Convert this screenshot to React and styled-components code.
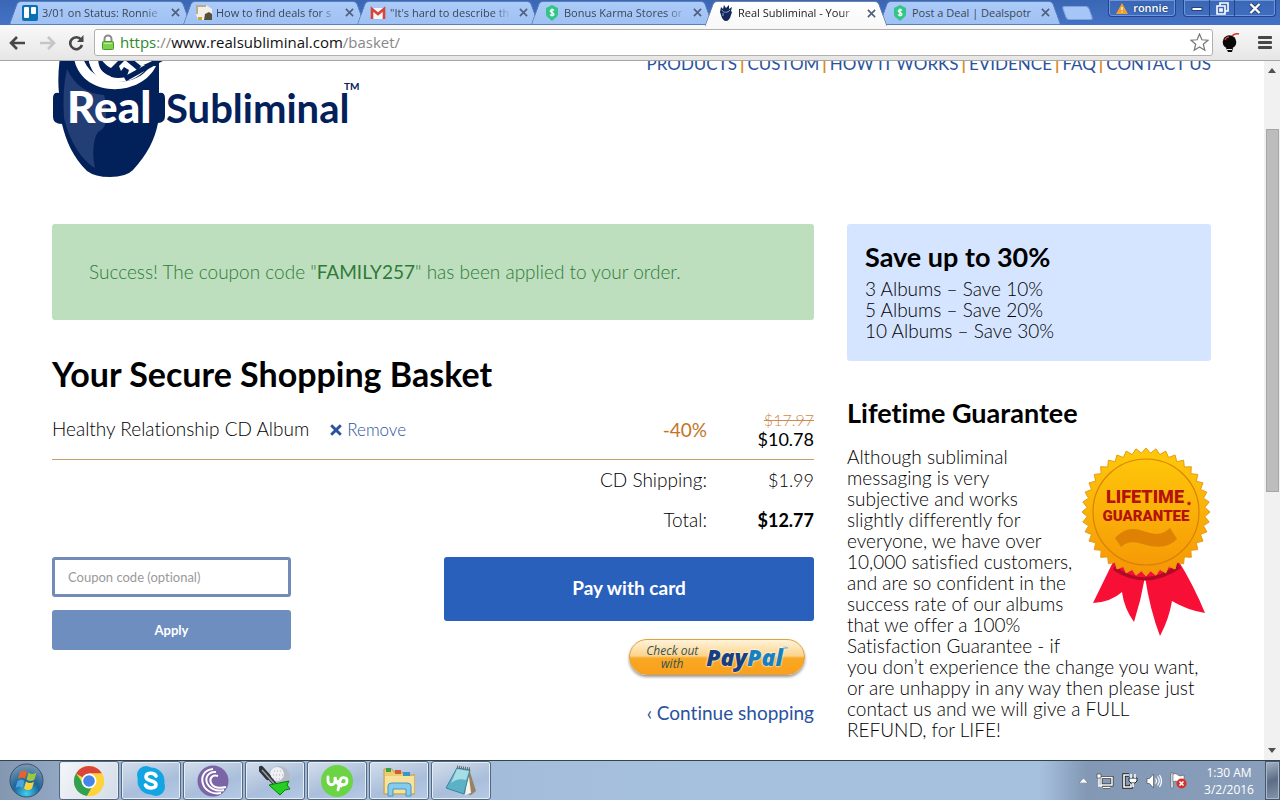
import React from "react";
import styled, { createGlobalStyle, css } from "styled-components";

const GlobalStyle = createGlobalStyle`
  *, *::before, *::after { box-sizing: border-box; }
  body {
    margin: 0;
    background: #fff;
    color: #000;
    font-family: "Lato", "Liberation Sans", sans-serif;
    font-variant-ligatures: none;
  }
  button, input { font: inherit; margin: 0; }
  a { color: #2a529e; text-decoration: none; }
  svg { display: block; flex: none; }
`;

const uiFont = `"Open Sans", "Noto Sans", sans-serif`;

const Desktop = styled.div`
  display: flex;
  flex-direction: column;
  height: 100vh;
  overflow: hidden;
`;

/* ---------- browser window ---------- */

const TabStrip = styled.div`
  display: flex;
  align-items: flex-start;
  height: 25px;
  padding: 0 4px 0 13px;
  background: linear-gradient(#3a66b4, #4472c6);
  font-family: ${uiFont};
`;

const tabHalf = css`
  content: "";
  position: absolute;
  z-index: -1;
  top: 1px;
  bottom: 0;
  width: 54%;
  background: ${(p) => (p.$active ? "linear-gradient(#ffffff, #f8f8f8)" : "linear-gradient(#abcbf8, #9fc1f3)")};
  border: 0 solid ${(p) => (p.$active ? "#6d83a8" : "#5b7fb8")};
  border-top-width: 1px;
  border-bottom-width: ${(p) => (p.$active ? "0" : "1px")};
`;

const Tab = styled.div`
  position: relative;
  z-index: ${(p) => (p.$active ? 2 : 1)};
  display: flex;
  align-items: center;
  flex: 0 1 174px;
  min-width: 0;
  height: ${(p) => (p.$active ? "26px" : "25px")};
  padding: 0 4px 0 9px;
  gap: 4px;
  &::before {
    ${tabHalf}
    left: 0;
    border-left-width: 1px;
    border-radius: 4px 0 0 2px;
    transform: skewX(-20deg);
  }
  &::after {
    ${tabHalf}
    right: 0;
    border-right-width: 1px;
    border-radius: 0 4px 2px 0;
    transform: skewX(20deg);
  }
`;

const TabTitle = styled.span`
  flex: 1;
  overflow: hidden;
  white-space: nowrap;
  font-size: 11px;
  line-height: 24px;
  color: ${(p) => (p.$active ? "#222" : "#3b4657")};
  mask-image: ${(p) => (p.$whole ? "none" : "linear-gradient(90deg, #000 84%, transparent)")};
`;

const TabClose = styled.button`
  display: flex;
  padding: 3px;
  border: 0;
  background: none;
  color: #50607c;
`;

const NewTab = styled.button`
  width: 27px;
  height: 14px;
  margin: 6px 0 0 7px;
  padding: 0;
  border: 1px solid #7fa3dc;
  border-radius: 3px;
  background: #a5c6f6;
  transform: skewX(20deg);
`;

const WindowButtons = styled.div`
  display: flex;
  margin-left: auto;
  gap: 7px;
`;

const Chip = styled.div`
  display: flex;
  height: 17px;
  border: 1px solid #23448a;
  border-top: 0;
  border-radius: 0 0 4px 4px;
  box-shadow: inset 0 0 0 1px #6e96dd;
`;

const ProfileButton = styled.button`
  display: flex;
  align-items: center;
  gap: 5px;
  padding: 0 7px;
  border: 0;
  background: none;
  color: #fff;
  font-size: 11px;
  font-weight: 600;
  line-height: 16px;
  text-shadow: 0 0 2px #16306b;
`;

const ControlButton = styled.button`
  display: grid;
  place-items: center;
  width: ${(p) => (p.$wide ? "41px" : "25px")};
  padding: 0;
  border: 0;
  background: none;
  & + & { border-left: 1px solid #23448a; }
`;

const Toolbar = styled.div`
  display: flex;
  align-items: center;
  gap: 8px;
  height: 36px;
  padding: 0 8px;
  background: linear-gradient(#f9f9f9, #e6e6e6);
  border-bottom: 1px solid #a5a5a5;
`;

const NavButtons = styled.div`
  display: flex;
  gap: 10px;
  width: 78px;
`;

const IconButton = styled.button`
  display: flex;
  padding: 0;
  border: 0;
  background: none;
`;

const AddressBar = styled.div`
  display: flex;
  flex: 1;
  align-items: center;
  gap: 5px;
  height: 27px;
  padding: 0 3px 0 6px;
  background: #fff;
  border: 1px solid #b4b0ac;
  border-radius: 3px;
  font-family: ${uiFont};
  font-size: 15px;
`;

const Url = styled.div`
  flex: 1;
  line-height: 20px;
  padding-bottom: 2px;
  color: #888;
  b { font-weight: 400; color: #111; }
  i { font-style: normal; color: #2b8a2b; }
`;

const ToolbarExtras = styled.div`
  display: flex;
  align-items: center;
  gap: 17px;
`;

/* ---------- page ---------- */

const Viewport = styled.div`
  display: flex;
  flex: 1;
  min-height: 0;
`;

const Page = styled.div`
  flex: 1;
  min-width: 0;
  overflow: hidden;
  padding: 0 53px 0 52px;
`;

const ScrollBar = styled.div`
  display: flex;
  flex-direction: column;
  align-items: center;
  justify-content: space-between;
  width: 16px;
  padding: 7px 0;
  background: #f1f1f1;
`;

const ScrollThumb = styled.div`
  width: 13px;
  height: 53%;
  margin: 56px 0 auto;
  background: #bdbdbd;
  border: 1px solid #a6a6a6;
`;

const Header = styled.header`
  display: flex;
  align-items: flex-start;
  justify-content: space-between;
  margin-top: -21px;
  margin-bottom: 43px;
`;

const MainNav = styled.nav`
  display: flex;
  gap: 3px;
  padding-top: 13px;
  font-size: 17px;
  line-height: 22px;
  color: #d98a22;
  white-space: nowrap;
  span { font-weight: 700; }
`;

const Columns = styled.div`
  display: grid;
  grid-template-columns: minmax(0, 1fr) 364px;
  gap: 33px;
  font-size: 19px;
  font-weight: 300;
`;

const Alert = styled.div`
  padding: 36px 37px;
  border-radius: 3px;
  background: #bddfbe;
  color: #2f7a39;
  line-height: 24px;
`;

const Title = styled.h1`
  margin: 33px 0 12px;
  font-size: 34px;
  font-weight: 700;
  line-height: 42px;
`;

const Basket = styled.table`
  width: 100%;
  border-spacing: 0;
  line-height: 20px;
  td { height: 40px; padding: 0; text-align: right; }
  td:last-child { width: 107px; }
  tr:first-child td { height: 53px; padding-bottom: 7px; border-bottom: 1px solid #c9a06a; }
  tr:first-child td:first-child { text-align: left; }
`;

const Remove = styled.a`
  display: inline-flex;
  align-items: center;
  gap: 5px;
  margin-left: 21px;
  font-size: 17px;
`;

const Discount = styled.span`
  font-weight: 400;
  color: #c2751f;
`;

const OldPrice = styled.del`
  display: block;
  font-size: 16px;
  line-height: 18px;
  color: #cf8a4e;
`;

const Price = styled.span`
  font-size: 18px;
  font-weight: ${(p) => (p.$total ? 700 : p.$strong ? 400 : 300)};
`;

const Actions = styled.div`
  display: flex;
  justify-content: space-between;
  align-items: flex-start;
  margin-top: 17px;
`;

const CouponForm = styled.form`
  display: grid;
  gap: 13px;
  width: 239px;
  font-size: 13px;
  font-weight: 400;
`;

const CouponInput = styled.input`
  width: 100%;
  height: 40px;
  padding: 0 13px;
  border: 3px solid #728cb7;
  border-radius: 3px;
  &::placeholder { color: #9a9a9a; }
`;

const SolidButton = styled.button`
  width: 100%;
  height: ${(p) => (p.$large ? "64px" : "40px")};
  padding: ${(p) => (p.$large ? "0 0 3px" : "0")};
  border: 0;
  border-radius: 3px;
  background: ${(p) => (p.$large ? "#2960bb" : "#6d8ebf")};
  color: #fff;
  font-size: ${(p) => (p.$large ? "19px" : "13px")};
  font-weight: 700;
`;

const Checkout = styled.div`
  display: flex;
  flex-direction: column;
  align-items: flex-end;
  width: 370px;
`;

const PayPalButton = styled.button`
  display: flex;
  align-items: center;
  justify-content: center;
  gap: 8px;
  width: 176px;
  height: 36px;
  margin: 18px 9px 26px 0;
  padding: 0;
  border: 1px solid #e2a03a;
  border-radius: 18px;
  background: linear-gradient(#fff3da, #fbd48c 46%, #f9a823 54%, #f9a01c);
  box-shadow: 0 2px 3px #9a9a9a;
  color: #36515a;
  font-family: ${uiFont};
  font-size: 12px;
  font-weight: 400;
  font-style: italic;
  line-height: 13px;
`;

const PayPalName = styled.span`
  display: flex;
  color: #1a80bd;
  font-size: 23px;
  font-weight: 800;
  line-height: 28px;
  text-shadow: 0 0 2px #fff, 0 0 2px #fff;
  b { font-weight: 800; color: #17407c; }
  sup { font-size: 6px; font-weight: 400; line-height: 12px; }
`;

const Continue = styled.a`
  font-weight: 400;
  line-height: 24px;
`;

const Savings = styled.section`
  padding: 18px 18px 20px;
  border-radius: 3px;
  background: #d6e5ff;
  line-height: 21px;
`;

const SideTitle = styled.h2`
  margin: ${(p) => (p.$spaced ? "37px 0 18px" : "0 0 6px")};
  font-size: 27px;
  font-weight: 700;
  line-height: 30px;
`;

const Guarantee = styled.p`
  margin: 0;
  line-height: 21px;
  white-space: nowrap;
  svg { float: right; }
`;

/* ---------- taskbar ---------- */

const Taskbar = styled.footer`
  display: flex;
  height: 40px;
  background: linear-gradient(90deg, #8497b1, #9cb3d0 8%, #a6c1de 55%, #a6c1de);
  border-top: 1px solid #34444f;
  font-family: ${uiFont};
`;

const StartButton = styled.button`
  display: flex;
  width: 59px;
  padding: 2px 0 0 9px;
  border: 0;
  background: none;
`;

const TaskButton = styled.button`
  display: grid;
  place-items: center;
  width: 60px;
  margin-right: 2px;
  padding: 0;
  border: 1px solid #56687f;
  border-radius: 3px;
  background: ${(p) => (p.$active ? "linear-gradient(120deg, #f3f5f8, #d3dce8)" : "linear-gradient(160deg, #d3deeb, #a9bedb 60%, #b5cae5)")};
  box-shadow: inset 0 0 0 1px #e5edf6;
`;

const Tray = styled.div`
  display: flex;
  align-items: center;
  margin-left: auto;
  padding-left: 40px;
  background: linear-gradient(90deg, transparent, #8298b5 20%, #8a9fbb);
`;

const TrayIcons = styled.div`
  display: flex;
  align-items: center;
  gap: 8px;
  margin-right: 6px;
`;

const Clock = styled.time`
  width: 72px;
  color: #fff;
  font-size: 12px;
  line-height: 17px;
  text-align: center;
`;

const ShowDesktop = styled.button`
  align-self: stretch;
  width: 15px;
  padding: 0;
  border: 1px solid #46566d;
  background: linear-gradient(160deg, #a7b4c5, #5c6c84 50%, #8696ad);
  box-shadow: inset 0 0 0 1px #a9b7ca;
`;

/* ---------- drawings ---------- */

const Cross = ({ size = 10, width = 1.8 }) => (
  <svg width={size} height={size} viewBox="0 0 10 10" stroke="currentColor" strokeWidth={width}>
    <path d="M1 1l8 8M9 1L1 9" />
  </svg>
);

const icons = {
  trello: (
    <>
      <rect width="16" height="16" rx="2" fill="#0b6fb3" />
      <rect x="2" y="2" width="5" height="11" rx="1" fill="#fff" />
      <rect x="9" y="2" width="5" height="7" rx="1" fill="#fff" />
    </>
  ),
  photo: (
    <>
      <path d="M0 0h10l6 4v11H2L0 9z" fill="#f1efe8" />
      <path d="M0 0h10v2H2v7H0z" fill="#b5ad91" />
      <path d="M9 9l4-2 3 2v6H8z" fill="#55503a" />
      <path d="M2 12h4v3H2z" fill="#c9a63b" />
    </>
  ),
  gmail: (
    <>
      <rect x="1" y="3" width="14" height="11" fill="#f6f6f6" />
      <path d="M2 14V4l6 5 6-5v10" fill="none" stroke="#d5453a" strokeWidth="2.6" />
    </>
  ),
  deal: (
    <>
      <path d="M8 0l6 3v6c0 3-3 4-6 7-3-3-6-4-6-7V3z" fill="#31c688" />
      <path d="M10 5.500C9 4.300 6.200 4.500 6.200 6c0 2 3.800 1.200 3.800 3.200 0 1.700-3 1.700-4 .3M8 3.500v8" fill="none" stroke="#fff" strokeWidth="1.200" />
    </>
  ),
  head: (
    <>
      <path d="M3 2l2 2 1-4 2 3 3-3v4l3-2-1 4 1 1-1 3c-1 4-3 6-5 6s-4-2-5-6L2 7z" fill="#132a58" />
      <path d="M4 5c1 3 6 3 8 0M5 8v3" fill="none" stroke="#8ba3cf" />
    </>
  ),
};

const TabIcon = ({ name }) => (
  <svg width="16" height="16" viewBox="0 0 16 16">{icons[name]}</svg>
);

const Logo = () => (
  <svg width="308" height="141" viewBox="52 40 308 141" role="img" aria-label="Real Subliminal">
    <path d="M61 50H159L159 93Q165 92 165 98V116Q165 123 158 123C155 139 147 155 133 170Q126 177 110 177Q95 177 87 171C73 157 66 141 62 124Q53 124 53 117V98Q53 92 59 93Q57 75 61 50Z" fill="#02205a" />
    <path d="M67 69C75 86 88 94 104 95C107 104 106 112 106 117C107 124 103 130 98 132C93 139 92 155 95 168C80 159 69 139 64 118Q62 90 67 69Z" fill="#233d75" />
    <path d="M74 58C80 97 140 99 156 66L150 66C135 90 92 86 83 58Z" fill="#fff" />
    <path d="M88 56C91 88 134 90 149 65L142 65C128 85 99 82 95 56Z" fill="#fff" />
    <path d="M88 56C91 78 103 82 117 82L110 76C100 72 98 66 98 56Z" fill="#fff" />
    <path d="M100 58Q106 66 111 68L119 60L116 58Z" fill="#fff" />
    <path d="M119 66L125 60L137 70L131 77L127 76L129 70L124 67L121 71Z" fill="#fff" />
    <path d="M131 58L141 66L160 58Z" fill="#fff" />
    <path d="M125 79L163 58" stroke="#02205a" strokeWidth="5" />
    <text x="67" y="123" fill="#fff" fontFamily="Lato, sans-serif" fontSize="44" fontWeight="900">Real</text>
    <text x="166" y="123" fill="#02205a" fontFamily="Lato, sans-serif" fontSize="40" fontWeight="700">Subliminal</text>
    <text x="344" y="90" fill="#02205a" fontFamily="Lato, sans-serif" fontSize="10" fontWeight="700">TM</text>
  </svg>
);

const sealPoints = Array.from({ length: 80 }, (_, i) => {
  const radius = i % 2 ? 59 : 64;
  const angle = (i * Math.PI) / 40;
  return `${(1146 + radius * Math.sin(angle)).toFixed(1)},${(512 - radius * Math.cos(angle)).toFixed(1)}`;
}).join(" ");

const Seal = () => (
  <svg width="130" height="205" viewBox="1081 446 130 205" role="img" aria-label="Lifetime guarantee">
    <defs>
      <linearGradient id="gold" x1="0" y1="0" x2="0" y2="1">
        <stop offset="0" stopColor="#ffca0a" />
        <stop offset="1" stopColor="#f59606" />
      </linearGradient>
    </defs>
    <path d="M1113 562L1093 603Q1111 602 1122 592Q1124 608 1134 622Q1141 600 1145 577Q1150 610 1160 636Q1169 619 1172 601Q1187 610 1205 613Q1194 586 1178 560Z" fill="#f80f35" />
    <path d="M1115 566Q1146 590 1178 563L1181 568Q1146 592 1113 570Z" fill="#b20a25" />
    <polygon points={sealPoints} fill="url(#gold)" stroke="#e79a12" />
    <circle cx="1146" cy="512" r="53" fill="none" stroke="#d98205" strokeWidth="1.2" />
    <g fill="#b3130b" fontFamily="Roboto, sans-serif" fontWeight="900" textAnchor="middle">
      <text x="1145" y="503" fontSize="18">LIFETIME</text>
      <text x="1146" y="521" fontSize="15">GUARANTEE</text>
    </g>
    <path d="M1189 501l.7 1.500 1.600.2-1.200 1.200.3 1.700-1.400-.9-1.400.9.300-1.700-1.200-1.200 1.600-.2z" fill="#b3130b" />
    <path d="M1115 538Q1126 526 1140 530C1153 534 1160 537 1170 528L1177 539Q1168 549 1150 546C1138 543 1130 539 1121 547Z" fill="#df8203" />
  </svg>
);

const taskIcons = {
  Chrome: (
    <>
      <circle cx="16" cy="16" r="15" fill="#fdd23b" />
      <path d="M16 16L3 8.500A15 15 0 0 1 29 8.500H16z" fill="#d9453a" />
      <path d="M3 8.500A15 15 0 0 0 14 31L20 20l-8 1z" fill="#2fa14f" />
      <path d="M16 8.500h13A15 15 0 0 1 14 31l7-11z" fill="#fdd23b" />
      <circle cx="16" cy="16" r="7.500" fill="#fff" />
      <circle cx="16" cy="16" r="5.800" fill="#4584e8" />
    </>
  ),
  Skype: (
    <>
      <circle cx="11" cy="10" r="9" fill="#12a5e3" />
      <circle cx="21" cy="22" r="9" fill="#12a5e3" />
      <circle cx="16" cy="16" r="13.500" fill="#12a5e3" />
      <path d="M21 11C19 7 11 7.500 11 12c0 5 10 2.500 10 7.500 0 4.500-9 4.500-10.500.5" fill="none" stroke="#fff" strokeWidth="3.600" strokeLinecap="round" />
    </>
  ),
  BitTorrent: (
    <>
      <circle cx="16" cy="16" r="15.500" fill="#7b65a7" />
      <g fill="none" stroke="#fff" strokeWidth="2">
        <path d="M21 11C15 9 12 14 14 18s7 6 15 4" />
        <path d="M19 7C11 6 8 13 10 18s9 9 17 7" />
        <path d="M16 4C6 5 4 13 6 19s9 11 18 9" />
      </g>
    </>
  ),
  Golf: (
    <>
      <circle cx="20" cy="12" r="11" fill="#b4bbc6" />
      <circle cx="18" cy="9" r="7" fill="#eef0f4" />
      <path d="M15 6h10M14 10h13M14 14h14" stroke="#aab2be" strokeDasharray="1 2" />
      <path d="M2 4L9 12" stroke="#303438" strokeWidth="6" strokeLinecap="round" />
      <path d="M8 10L20 24" stroke="#303438" strokeWidth="4" strokeLinecap="round" />
      <path d="M3 5L19 23" stroke="#9aa0a5" strokeWidth="1.500" />
      <path d="M10 20l20-4-2 4 3 4-5 1-5 5z" fill="#25cf22" stroke="#0c7a12" />
    </>
  ),
  Upwork: (
    <>
      <circle cx="16" cy="16" r="16" fill="#6bd445" />
      <path d="M7 12v4c0 5 7 5 7 0v-4c1 5 3 8 6 9M17 25l2-9c1-5 7-4 7 0 0 5-7 5-8 0" fill="none" stroke="#fff" strokeWidth="2.800" strokeLinecap="round" />
    </>
  ),
  Explorer: (
    <>
      <path d="M1 4h8l2 3h8l2 3h11v19H1z" fill="#edcd71" stroke="#c39e45" />
      <path d="M3 3h5v4H3z" fill="#34a34b" />
      <path d="M12 5h6v4h-6z" fill="#d45b39" />
      <path d="M20 7h7v4h-7z" fill="#3a96c7" />
      <path d="M2 11h29v17H2z" fill="#f6e29d" />
      <path d="M5 31V21q0-3 4-3h15q4 0 4 3v10h-5v-7H10v7z" fill="#84cbee" stroke="#4b95be" />
    </>
  ),
  Notepad: (
    <>
      <path d="M24 4l7 22-5 4-8-2z" fill="#9b815f" />
      <path d="M23 4l3 24-6 2z" fill="#f5f5f0" />
      <path d="M12 3l13 2-6 24-18-6z" fill="#5bb1c6" stroke="#3d8399" />
      <path d="M12 4l12 2-3 9C15 13 10 15 6 18z" fill="#a8dce6" />
      <path d="M12 2l13 2" stroke="#666" strokeWidth="3" strokeDasharray="1 1" />
    </>
  ),
};

const StartOrb = () => (
  <svg width="35" height="35" viewBox="0 0 35 35">
    <defs>
      <radialGradient id="orb" cx="0.5" cy="0.9" r="0.9">
        <stop offset="0" stopColor="#3fd0f2" />
        <stop offset="0.45" stopColor="#1d6498" />
        <stop offset="1" stopColor="#7d9ab5" />
      </radialGradient>
    </defs>
    <circle cx="17.500" cy="17.500" r="16.500" fill="url(#orb)" stroke="#3c5068" />
    <path d="M11 9q4-3 7 0l-2 7q-3-3-7 0z" fill="#e8632c" />
    <path d="M19.500 9.500q3 3 8 0l-2 7q-4 3-8 0z" fill="#9ec73d" />
    <path d="M8.500 18q4-3 7 0l-2 7q-3-3-7 0z" fill="#4ba4dd" />
    <path d="M17 18.500q4 3 8 0l-2 7q-4 3-8 0z" fill="#fbd13c" />
  </svg>
);

/* ---------- data ---------- */

const tabs = [
  { icon: "trello", title: "3/01 on Status: Ronnie" },
  { icon: "photo", title: "How to find deals for s" },
  { icon: "gmail", title: "\"It's hard to describe th" },
  { icon: "deal", title: "Bonus Karma Stores or" },
  { icon: "head", title: "Real Subliminal - Your", active: true },
  { icon: "deal", title: "Post a Deal | Dealspotr", whole: true },
];

const navLinks = ["PRODUCTS", "CUSTOM", "HOW IT WORKS", "EVIDENCE", "FAQ", "CONTACT US"];

export default function App() {
  return (
    <Desktop>
      <GlobalStyle />
      <TabStrip>
        {tabs.map((t) => (
          <Tab key={t.title} $active={t.active}>
            <TabIcon name={t.icon} />
            <TabTitle $active={t.active} $whole={t.whole}>{t.title}</TabTitle>
            <TabClose aria-label="Close tab"><Cross size={9} /></TabClose>
          </Tab>
        ))}
        <NewTab aria-label="New tab" />
        <WindowButtons>
          <Chip>
            <ProfileButton>
              <svg width="12" height="11" viewBox="0 0 12 11">
                <path d="M6 0l6 11H0z" fill="#f0a02c" />
                <path d="M6 4v3M6 8.500v1" stroke="#fff" strokeWidth="1.300" />
              </svg>
              ronnie
            </ProfileButton>
          </Chip>
          <Chip>
            <ControlButton aria-label="Minimize">
              <svg width="12" height="12" viewBox="0 0 12 12"><rect x="1" y="5.500" width="10" height="3" fill="#fff" stroke="#2c4270" /></svg>
            </ControlButton>
            <ControlButton aria-label="Restore">
              <svg width="13" height="13" viewBox="0 0 13 13" fill="none" stroke="#fff" strokeWidth="1.600"><path d="M4 3.500V1h8v8H9.500M1 4h8v8H1zM4 7h2v2H4z" /></svg>
            </ControlButton>
            <ControlButton $wide aria-label="Close">
              <svg width="12" height="11" viewBox="0 0 12 11"><path d="M1.500 1l9 9M10.500 1l-9 9" stroke="#2c4270" strokeWidth="4" /><path d="M1.500 1l9 9M10.500 1l-9 9" stroke="#fff" strokeWidth="2.400" /></svg>
            </ControlButton>
          </Chip>
        </WindowButtons>
      </TabStrip>
      <Toolbar>
        <NavButtons>
          <IconButton aria-label="Back">
            <svg width="20" height="16" viewBox="0 0 20 16" fill="none" stroke="#474747" strokeWidth="2.600"><path d="M17 8H3M9 2L3 8l6 6" /></svg>
          </IconButton>
          <IconButton aria-label="Forward">
            <svg width="20" height="16" viewBox="0 0 20 16" fill="none" stroke="#c6c6c6" strokeWidth="2.600"><path d="M2 8h14M10 2l6 6-6 6" /></svg>
          </IconButton>
          <IconButton aria-label="Reload">
            <svg width="17" height="16" viewBox="0 0 17 16"><path d="M13 4.500A6 6 0 1 0 14 10" fill="none" stroke="#474747" strokeWidth="2.600" /><path d="M15.500 0v7H9z" fill="#474747" /></svg>
          </IconButton>
        </NavButtons>
        <AddressBar>
          <svg width="14" height="17" viewBox="0 0 14 17">
            <path d="M3.500 8V5a3.500 3.500 0 0 1 7 0v3" fill="none" stroke="#8a8a8a" strokeWidth="2" />
            <rect x="1.500" y="7.500" width="11" height="8" rx="1" fill="#7fd051" stroke="#4b9c2c" />
            <path d="M3 9.500h8" stroke="#bdf09b" />
          </svg>
          <Url><i>https</i>://<b>www.realsubliminal.com</b>/basket/</Url>
          <IconButton aria-label="Bookmark this page">
            <svg width="19" height="19" viewBox="0 0 19 19" fill="#fff" stroke="#777" strokeWidth="1.200"><path d="M9.500 1l2.400 5.800 6.100.4-4.700 4 1.500 6.100-5.300-3.400-5.300 3.400 1.500-6.100-4.700-4 6.100-.4z" /></svg>
          </IconButton>
        </AddressBar>
        <ToolbarExtras>
          <IconButton aria-label="Extension">
            <svg width="20" height="20" viewBox="0 0 20 20">
              <circle cx="8.500" cy="9" r="6.800" fill="#080808" />
              <path d="M5 15h7l-1 4H7z" fill="#080808" />
              <path d="M6 16.500h5" stroke="#eee" />
              <path d="M4 7q1-3 4-3M11 3q3-3 7-2" fill="none" stroke="#dc3434" strokeWidth="1.600" />
            </svg>
          </IconButton>
          <IconButton aria-label="Menu">
            <svg width="14" height="14" viewBox="0 0 14 14" fill="#474747"><rect y="0" width="14" height="3" rx="1" /><rect y="5" width="14" height="3" rx="1" /><rect y="10" width="14" height="3" rx="1" /></svg>
          </IconButton>
        </ToolbarExtras>
      </Toolbar>

      <Viewport>
        <Page>
          <Header>
            <Logo />
            <MainNav>
              {navLinks.map((label, i) => (
                <React.Fragment key={label}>
                  {i > 0 && <span>|</span>}
                  <a href="#">{label}</a>
                </React.Fragment>
              ))}
            </MainNav>
          </Header>
          <Columns>
            <main>
              <Alert role="status">Success! The coupon code "<b>FAMILY257</b>" has been applied to your order.</Alert>
              <Title>Your Secure Shopping Basket</Title>
              <Basket>
                <tbody>
                  <tr>
                    <td>
                      Healthy Relationship CD Album
                      <Remove href="#"><Cross size={12} width={2.4} />Remove</Remove>
                    </td>
                    <td><Discount>-40%</Discount></td>
                    <td><OldPrice>$17.97</OldPrice><Price $strong>$10.78</Price></td>
                  </tr>
                  <tr><td colSpan={2}>CD Shipping:</td><td><Price>$1.99</Price></td></tr>
                  <tr><td colSpan={2}>Total:</td><td><Price $total>$12.77</Price></td></tr>
                </tbody>
              </Basket>
              <Actions>
                <CouponForm onSubmit={(e) => e.preventDefault()}>
                  <CouponInput aria-label="Coupon code" placeholder="Coupon code (optional)" />
                  <SolidButton>Apply</SolidButton>
                </CouponForm>
                <Checkout>
                  <SolidButton $large>Pay with card</SolidButton>
                  <PayPalButton>
                    <span>Check out<br />with</span>
                    <PayPalName><b>Pay</b>Pal<sup>℠</sup></PayPalName>
                  </PayPalButton>
                  <Continue href="#">‹ Continue shopping</Continue>
                </Checkout>
              </Actions>
            </main>
            <aside>
              <Savings>
                <SideTitle>Save up to 30%</SideTitle>
                3 Albums – Save 10%<br />
                5 Albums – Save 20%<br />
                10 Albums – Save 30%
              </Savings>
              <SideTitle $spaced>Lifetime Guarantee</SideTitle>
              <Guarantee>
                <Seal />
                Although subliminal<br />
                messaging is very<br />
                subjective and works<br />
                slightly differently for<br />
                everyone, we have over<br />
                10,000 satisfied customers,<br />
                and are so confident in the<br />
                success rate of our albums<br />
                that we offer a 100%<br />
                Satisfaction Guarantee - if<br />
                you don’t experience the change you want,<br />
                or are unhappy in any way then please just<br />
                contact us and we will give a FULL<br />
                REFUND, for LIFE!
              </Guarantee>
            </aside>
          </Columns>
        </Page>
        <ScrollBar>
          <svg width="8" height="5" viewBox="0 0 8 5"><path d="M0 5l4-5 4 5z" fill="#505050" /></svg>
          <ScrollThumb />
          <svg width="8" height="5" viewBox="0 0 8 5"><path d="M0 0l4 5 4-5z" fill="#505050" /></svg>
        </ScrollBar>
      </Viewport>

      <Taskbar>
        <StartButton aria-label="Start"><StartOrb /></StartButton>
        {Object.entries(taskIcons).map(([name, drawing]) => (
          <TaskButton key={name} aria-label={name} $active={name === "Chrome"}>
            <svg width="32" height="32" viewBox="0 0 32 32">{drawing}</svg>
          </TaskButton>
        ))}
        <Tray>
          <TrayIcons>
            <svg width="9" height="5" viewBox="0 0 9 5"><path d="M0 5l4.500-5L9 5z" fill="#fff" stroke="#4d5c70" strokeWidth="0.500" /></svg>
            <svg width="18" height="16" viewBox="0 0 18 16" fill="none">
              <path d="M5 4.500h11v7.500H5zM7 14.500h7" stroke="#333" strokeWidth="3" />
              <path d="M5 4.500h11v7.500H5zM7 14.500h7M3 2v11h3" stroke="#fff" strokeWidth="1.500" />
              <path d="M1 1h4v4H1z" fill="#fff" stroke="#333" strokeWidth="0.600" />
            </svg>
            <svg width="16" height="16" viewBox="0 0 16 16" fill="none">
              <path d="M7 2H2v12h7v-3" stroke="#222" strokeWidth="3.400" />
              <path d="M7 2H2v12h7v-3" stroke="#fff" strokeWidth="1.600" />
              <path d="M7 5h8v3l-2 2H9L7 8z" fill="#fff" stroke="#222" />
              <path d="M9 1v4M13 1v4M11 10v4" stroke="#fff" strokeWidth="1.500" />
            </svg>
            <svg width="16" height="16" viewBox="0 0 16 16" fill="none">
              <path d="M1 5.500h2.500L7.500 1v14l-4-4.500H1z" fill="#fff" stroke="#555" strokeWidth="0.700" />
              <path d="M9.500 5.500q2 2.500 0 5M11.500 3.500q3.500 4.500 0 9M13.500 2q4 6 0 12" stroke="#fff" strokeWidth="1.200" />
            </svg>
            <svg width="17" height="17" viewBox="0 0 17 17">
              <path d="M1 1h2v15H1z" fill="#fff" stroke="#444" strokeWidth="0.500" />
              <path d="M3 2q3-1 5 1t6 0v7q-4 2-6 0t-5 0z" fill="#fff" stroke="#444" strokeWidth="0.500" />
              <circle cx="11.500" cy="11.500" r="5" fill="#d4302c" />
              <path d="M9.500 9.500l4 4M13.500 9.500l-4 4" stroke="#fff" strokeWidth="1.600" />
            </svg>
          </TrayIcons>
          <Clock>1:30 AM<br />3/2/2016</Clock>
          <ShowDesktop aria-label="Show desktop" />
        </Tray>
      </Taskbar>
    </Desktop>
  );
}
